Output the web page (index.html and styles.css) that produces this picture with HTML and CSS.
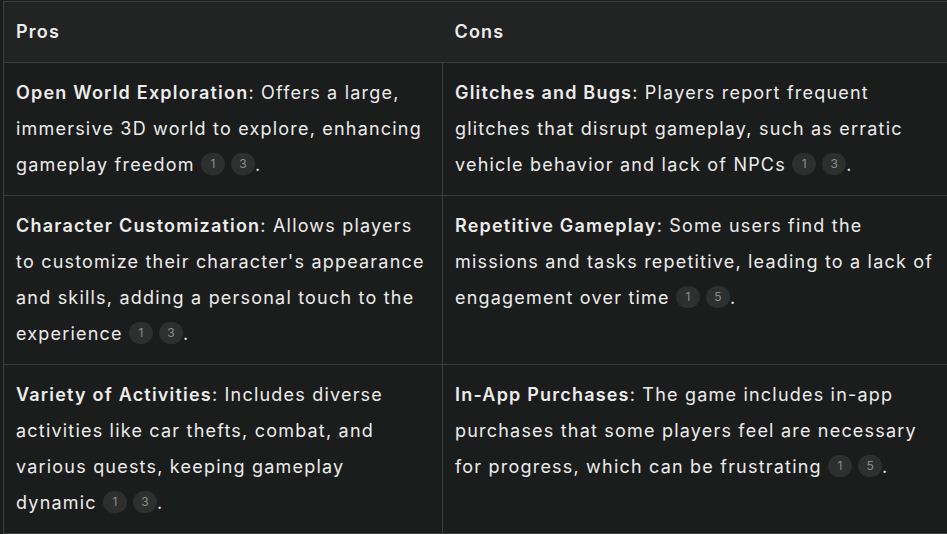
FILE: index.html
```html
<!DOCTYPE html>
<html>
<head>
<meta charset="utf-8">
<link rel="stylesheet" href="styles.css">
</head>
<body>
<div class="page">
<table class="cmp">
  <colgroup><col class="c1"><col class="c2"></colgroup>
  <thead>
    <tr><th>Pros</th><th>Cons</th></tr>
  </thead>
  <tbody>
    <tr>
      <td><strong>Open World Exploration</strong>: Offers a large, immersive 3D world to explore, enhancing gameplay freedom <span class="cites"><span class="cite">1</span><span class="cite">3</span></span>.</td>
      <td><strong>Glitches and Bugs</strong>: Players report frequent glitches that disrupt gameplay, such as erratic vehicle behavior and lack of NPCs <span class="cites"><span class="cite">1</span><span class="cite">3</span></span>.</td>
    </tr>
    <tr>
      <td><strong>Character Customization</strong>: Allows players to customize their character's appearance and skills, adding a personal touch to the experience <span class="cites"><span class="cite">1</span><span class="cite">3</span></span>.</td>
      <td><strong>Repetitive Gameplay</strong>: Some users find the missions and tasks repetitive, leading to a lack of engagement over time <span class="cites"><span class="cite">1</span><span class="cite">5</span></span>.</td>
    </tr>
    <tr>
      <td><strong>Variety of Activities</strong>: Includes diverse activities like car thefts, combat, and various quests, keeping gameplay dynamic <span class="cites"><span class="cite">1</span><span class="cite">3</span></span>.</td>
      <td><strong>In-App Purchases</strong>: The game includes in-app purchases that some players feel are necessary for progress, which can be frustrating <span class="cites"><span class="cite">1</span><span class="cite">5</span></span>.</td>
    </tr>
  </tbody>
</table>
</div>
</body>
</html>
```

FILE: styles.css
```css
html, body {
  margin: 0;
  padding: 0;
  background: #1b1c1c;
  overflow: hidden;
}
.page {
  padding: 1px 0 0 3px;
  width: 1000px;
}
.cmp {
  border-collapse: collapse;
  table-layout: fixed;
  width: 949px;
  font-family: Inter, "Noto Sans", sans-serif;
  font-size: 18px;
  line-height: 36px;
  letter-spacing: 1.2px;
  color: #ececec;
  background: #1b1c1c;
}
.c1 { width: 439px; }
.c2 { width: 510px; }
.cmp th, .cmp td {
  border: 1px solid #3c3d3d;
  padding: 12px 12px 12px 12px;
  text-align: left;
  vertical-align: top;
}
.cmp th:last-child, .cmp td:last-child {
  padding-right: 16px;
}
.cmp thead th {
  background: #222323;
  font-weight: 600;
  border-left: none;
  border-right: none;
}
.cmp thead th:first-child { border-left: 1px solid #3c3d3d; }
.cmp strong { font-weight: 600; }
.cites {
  display: inline-flex;
  gap: 6px;
  vertical-align: middle;
  position: relative;
  top: -2px;
  letter-spacing: 0;
}
.cite {
  display: inline-flex;
  align-items: center;
  justify-content: center;
  width: 24px;
  height: 22px;
  border-radius: 11px;
  background: #2e2f2f;
  color: #8e8e8e;
  font-size: 12px;
  line-height: 1;
}
```
